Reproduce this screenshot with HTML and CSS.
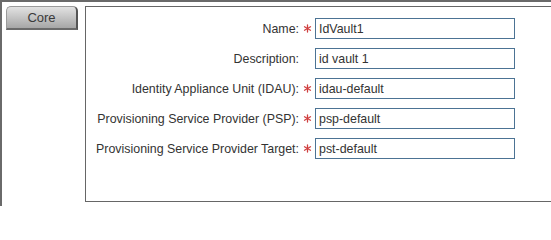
FILE: index.html
```html
<!DOCTYPE html>
<html>
<head>
<meta charset="utf-8">
<link rel="stylesheet" href="styles.css">
</head>
<body>
<div class="frame">
  <div class="tabs">
    <div class="tab">Core</div>
  </div>
  <div class="panel">
    <div class="form">
      <div class="row">
        <label class="label">Name:</label>
        <span class="req"><svg width="9" height="9" viewBox="0 0 9 9"><g stroke="#d04040" stroke-width="1.3" stroke-linecap="round"><line x1="4.5" y1="1" x2="4.5" y2="8"/><line x1="1.5" y1="2.8" x2="7.5" y2="6.2"/><line x1="1.5" y1="6.2" x2="7.5" y2="2.8"/></g></svg></span>
        <input class="field" type="text" value="IdVault1">
      </div>
      <div class="row">
        <label class="label">Description:</label>
        <span class="req"></span>
        <input class="field" type="text" value="id vault 1">
      </div>
      <div class="row">
        <label class="label">Identity Appliance Unit (IDAU):</label>
        <span class="req"><svg width="9" height="9" viewBox="0 0 9 9"><g stroke="#d04040" stroke-width="1.3" stroke-linecap="round"><line x1="4.5" y1="1" x2="4.5" y2="8"/><line x1="1.5" y1="2.8" x2="7.5" y2="6.2"/><line x1="1.5" y1="6.2" x2="7.5" y2="2.8"/></g></svg></span>
        <input class="field" type="text" value="idau-default">
      </div>
      <div class="row">
        <label class="label">Provisioning Service Provider (PSP):</label>
        <span class="req"><svg width="9" height="9" viewBox="0 0 9 9"><g stroke="#d04040" stroke-width="1.3" stroke-linecap="round"><line x1="4.5" y1="1" x2="4.5" y2="8"/><line x1="1.5" y1="2.8" x2="7.5" y2="6.2"/><line x1="1.5" y1="6.2" x2="7.5" y2="2.8"/></g></svg></span>
        <input class="field" type="text" value="psp-default">
      </div>
      <div class="row">
        <label class="label">Provisioning Service Provider Target:</label>
        <span class="req"><svg width="9" height="9" viewBox="0 0 9 9"><g stroke="#d04040" stroke-width="1.3" stroke-linecap="round"><line x1="4.5" y1="1" x2="4.5" y2="8"/><line x1="1.5" y1="2.8" x2="7.5" y2="6.2"/><line x1="1.5" y1="6.2" x2="7.5" y2="2.8"/></g></svg></span>
        <input class="field" type="text" value="pst-default">
      </div>
    </div>
  </div>
</div>
</body>
</html>
```

FILE: styles.css
```css
html, body {
  margin: 0;
  padding: 0;
  background: #ffffff;
}
body {
  font-family: "Liberation Sans", Arial, sans-serif;
  font-size: 12.4px;
  color: #333333;
}
.frame {
  box-sizing: border-box;
  width: 551px;
  height: 206px;
  overflow: hidden;
  border-top: 2px solid #6a6a6a;
  border-left: 2px solid #6a6a6a;
  display: flex;
  align-items: flex-start;
  padding: 4px 0 0 4px;
  gap: 7px;
}
.tabs {
  display: flex;
  flex-direction: column;
  flex: none;
}
.tab {
  box-sizing: border-box;
  width: 72px;
  height: 24px;
  border: 1px solid #9a9a9a;
  border-right: 2px solid #555555;
  border-bottom: 2px solid #6a6a6a;
  border-radius: 5px 5px 0 0;
  background: linear-gradient(#e2e2e2, #c4c4c4 50%, #a6a6a6);
  text-align: center;
  line-height: 21px;
  font-size: 13px;
  color: #3a3a3a;
}
.panel {
  box-sizing: border-box;
  flex: none;
  width: 600px;
  height: 196px;
  border: 1px solid #666666;
  padding-top: 11px;
}
.form {
  display: flex;
  flex-direction: column;
  gap: 9px;
}
.row {
  display: flex;
  align-items: center;
  height: 21px;
}
.label {
  width: 213px;
  text-align: right;
  color: #333333;
}
.req {
  width: 16px;
  display: flex;
  justify-content: center;
  align-items: center;
}
.req svg {
  display: block;
}
.field {
  box-sizing: border-box;
  width: 200px;
  height: 21px;
  margin: 0;
  border: 1px solid #4c7394;
  padding: 0 3px;
  font-family: "Liberation Sans", Arial, sans-serif;
  font-size: 12.4px;
  color: #333333;
  background: #ffffff;
  outline: none;
}
```
